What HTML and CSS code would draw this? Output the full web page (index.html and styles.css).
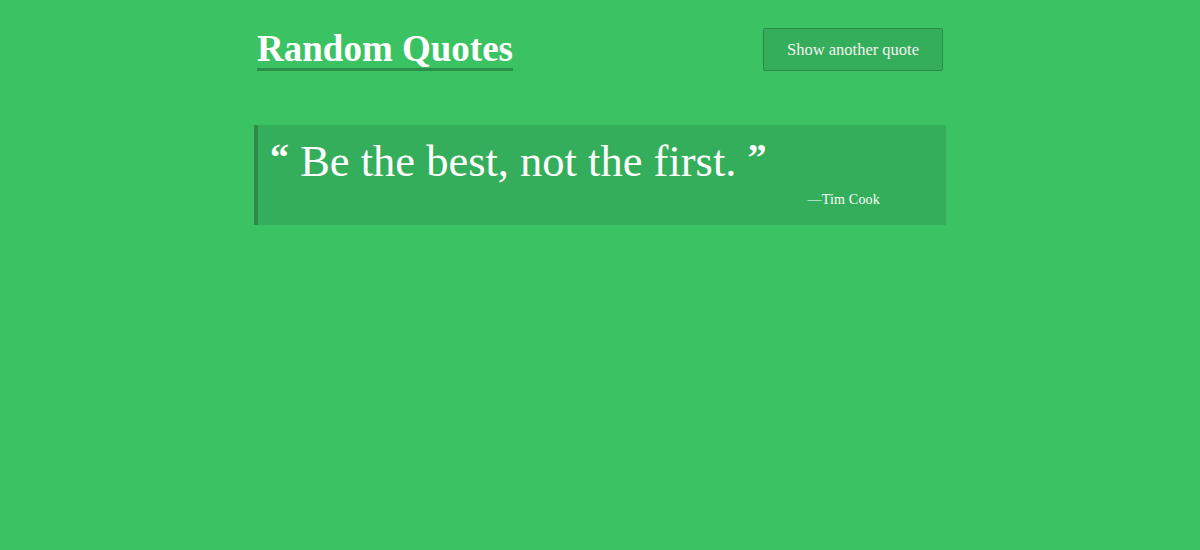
FILE: index.html
```html
<!DOCTYPE html>
<html lang="en">
<head>
<meta charset="utf-8">
<title>Random Quotes</title>
<link rel="stylesheet" href="styles.css">
</head>
<body>
<div class="page">
  <header class="header">
    <h1 class="title">Random Quotes</h1>
    <button class="btn" type="button">Show another quote</button>
  </header>
  <blockquote class="quote">
    <p class="quote-text"><span class="mark">“</span> Be the best, not the first. <span class="mark">”</span></p>
    <footer class="author">—Tim Cook</footer>
  </blockquote>
</div>
</body>
</html>
```
FILE: styles.css
```css
html, body {
  margin: 0;
  padding: 0;
  height: 100%;
}
body {
  background: #3bc262;
  color: #fff;
  font-family: "Liberation Serif", "DejaVu Serif", serif;
}
.page {
  width: 692px;
  margin: 0 auto;
  padding-top: 28px;
}
.header {
  display: flex;
  justify-content: space-between;
  align-items: flex-start;
  padding-left: 3px;
  padding-right: 3px;
}
.title {
  margin: 2px 0 0;
  font-size: 37px;
  font-weight: 700;
  line-height: 38px;
  border-bottom: 3px solid #2c8e4a;
}
.btn {
  background: #34ae5a;
  color: #f4f4f4;
  border: 1px solid #2a8a47;
  border-radius: 2px;
  font-family: inherit;
  font-size: 16.5px;
  width: 180px;
  height: 43px;
  padding: 0;
}
.quote {
  margin: 54px 0 0;
  background: #34ae5a;
  border-left: 4px solid #2a8c47;
  padding: 14px 12px 17px;
}
.quote-text {
  margin: 0;
  font-size: 44.5px;
  line-height: 44px;
}
.mark {
  font-weight: 700;
  font-size: 38px;
  line-height: 0;
  vertical-align: 6px;
}
.author {
  text-align: right;
  font-size: 14px;
  line-height: 16px;
  letter-spacing: 0.2px;
  padding-right: 54px;
  margin-top: 9px;
}
```
